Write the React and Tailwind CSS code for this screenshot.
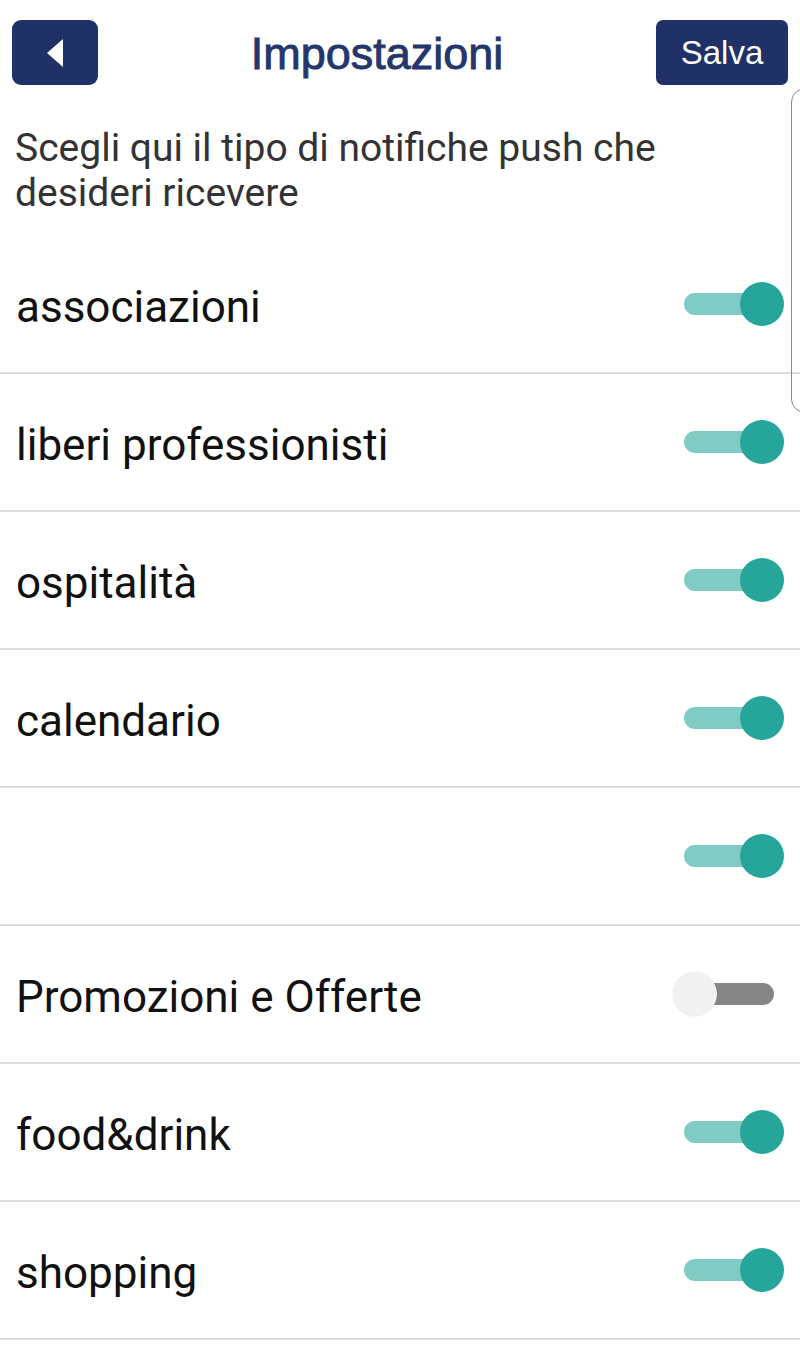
import React from 'react'

const items = [
    { label: 'associazioni', on: true },
    { label: 'liberi professionisti', on: true },
    { label: 'ospitalità', on: true },
    { label: 'calendario', on: true },
    { label: '', on: true },
    { label: 'Promozioni e Offerte', on: false },
    { label: 'food&drink', on: true },
    { label: 'shopping', on: true },
]

const Toggle = ({ on }) => {
    return (
        <div className="relative w-[100px] h-[44px]">
            {on ? (
                <>
                    <span className="absolute left-0 top-[11px] h-[22px] w-[90px] rounded-full bg-[#80cbc4]"></span>
                    <span className="absolute right-0 top-0 size-[44px] rounded-full bg-[#26a69a]"></span>
                </>
            ) : (
                <>
                    <span className="absolute left-[16px] top-[11px] h-[22px] w-[74px] rounded-full bg-[#858585]"></span>
                    <span className="absolute left-[-11px] top-0 size-[44px] rounded-full bg-[#f1f1f1] shadow-[0_0_2px_rgba(0,0,0,0.12)]"></span>
                </>
            )}
        </div>
    )
}

const App = () => {
    return (
        <div className="relative w-[800px] min-h-[1369px] bg-white overflow-hidden font-['Roboto','Liberation_Sans',sans-serif]">
            <div className="flex items-center justify-between pt-[20px] pl-[12px] pr-[12px]">
                <button className="flex h-[65px] w-[86px] items-center justify-center rounded-[9px] bg-[#1f3166]">
                    <svg width="20" height="30" viewBox="0 0 20 30">
                        <path d="M18 1 L2 15 L18 29 Z" fill="#ffffff" />
                    </svg>
                </button>
                <h1 className="text-[45px] font-normal text-[#24366b] leading-none font-['Liberation_Sans',sans-serif] pt-[2px] [-webkit-text-stroke:0.9px_#24366b]">Impostazioni</h1>
                <button className="h-[65px] w-[132px] rounded-[7px] bg-[#1f3166] text-white text-[33px] font-['Liberation_Sans',sans-serif]">Salva</button>
            </div>

            {/* scroll indicator */}
            <div className="absolute left-[791px] top-[88px] h-[325px] w-[20px] rounded-l-[14px] border border-[#8a8a8a]"></div>

            <p className="h-[151px] pt-[41px] pl-[15px] pr-[100px] text-[39px] leading-[45px] text-[#333333]">
                Scegli qui il tipo di notifiche push che desideri ricevere
            </p>

            <div className="flex flex-col">
                {items.map((item, i) => (
                    <div key={i} className="flex h-[138px] items-center justify-between border-b-2 border-[#dcdcdc] pl-[16px] pr-[16px]">
                        <span className="pt-[6px] text-[44px] text-[#111111]">{item.label}</span>
                        <Toggle on={item.on} />
                    </div>
                ))}
            </div>
        </div>
    )
}

export default App
